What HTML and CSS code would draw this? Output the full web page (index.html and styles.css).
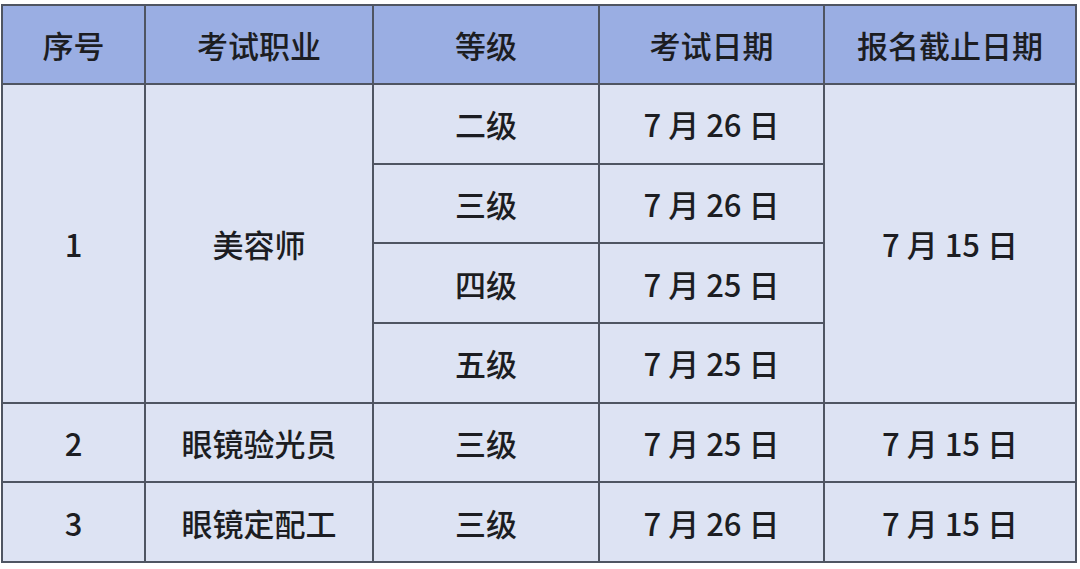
FILE: index.html
```html
<!DOCTYPE html>
<html lang="zh">
<head>
<meta charset="utf-8">
<link rel="stylesheet" href="styles.css">
</head>
<body>
<div class="wrap">
<table class="exam">
  <colgroup>
    <col class="c1"><col class="c2"><col class="c3"><col class="c4"><col class="c5">
  </colgroup>
  <thead>
    <tr><th>序号</th><th>考试职业</th><th>等级</th><th>考试日期</th><th>报名截止日期</th></tr>
  </thead>
  <tbody>
    <tr><td rowspan="4">1</td><td rowspan="4">美容师</td><td>二级</td><td>7 月 26 日</td><td rowspan="4">7 月 15 日</td></tr>
    <tr><td>三级</td><td>7 月 26 日</td></tr>
    <tr><td>四级</td><td>7 月 25 日</td></tr>
    <tr><td>五级</td><td>7 月 25 日</td></tr>
    <tr><td>2</td><td>眼镜验光员</td><td>三级</td><td>7 月 25 日</td><td>7 月 15 日</td></tr>
    <tr><td>3</td><td>眼镜定配工</td><td>三级</td><td>7 月 26 日</td><td>7 月 15 日</td></tr>
  </tbody>
</table>
</div>
</body>
</html>
```

FILE: styles.css
```css
html, body {
  margin: 0;
  padding: 0;
  background: #ffffff;
}
.wrap {
  padding: 4px 0 0 1px;
}
.exam {
  border-collapse: collapse;
  table-layout: fixed;
  width: 1074px;
  font-family: "Noto Sans CJK SC", "Noto Sans", sans-serif;
  color: #1c1d22;
  font-size: 31px;
}
.c1 { width: 143px; }
.c2 { width: 228px; }
.c3 { width: 226px; }
.c4 { width: 225px; }
.c5 { width: 252px; }
.exam th, .exam td {
  border: 2px solid #4f5562;
  text-align: center;
  vertical-align: middle;
  padding: 0;
  line-height: 1;
  font-weight: 500;
}
.exam th {
  background: #9aaee3;
  height: 77px;
}
.exam td {
  background: #dde3f3;
  height: 77.7px;
}
```
